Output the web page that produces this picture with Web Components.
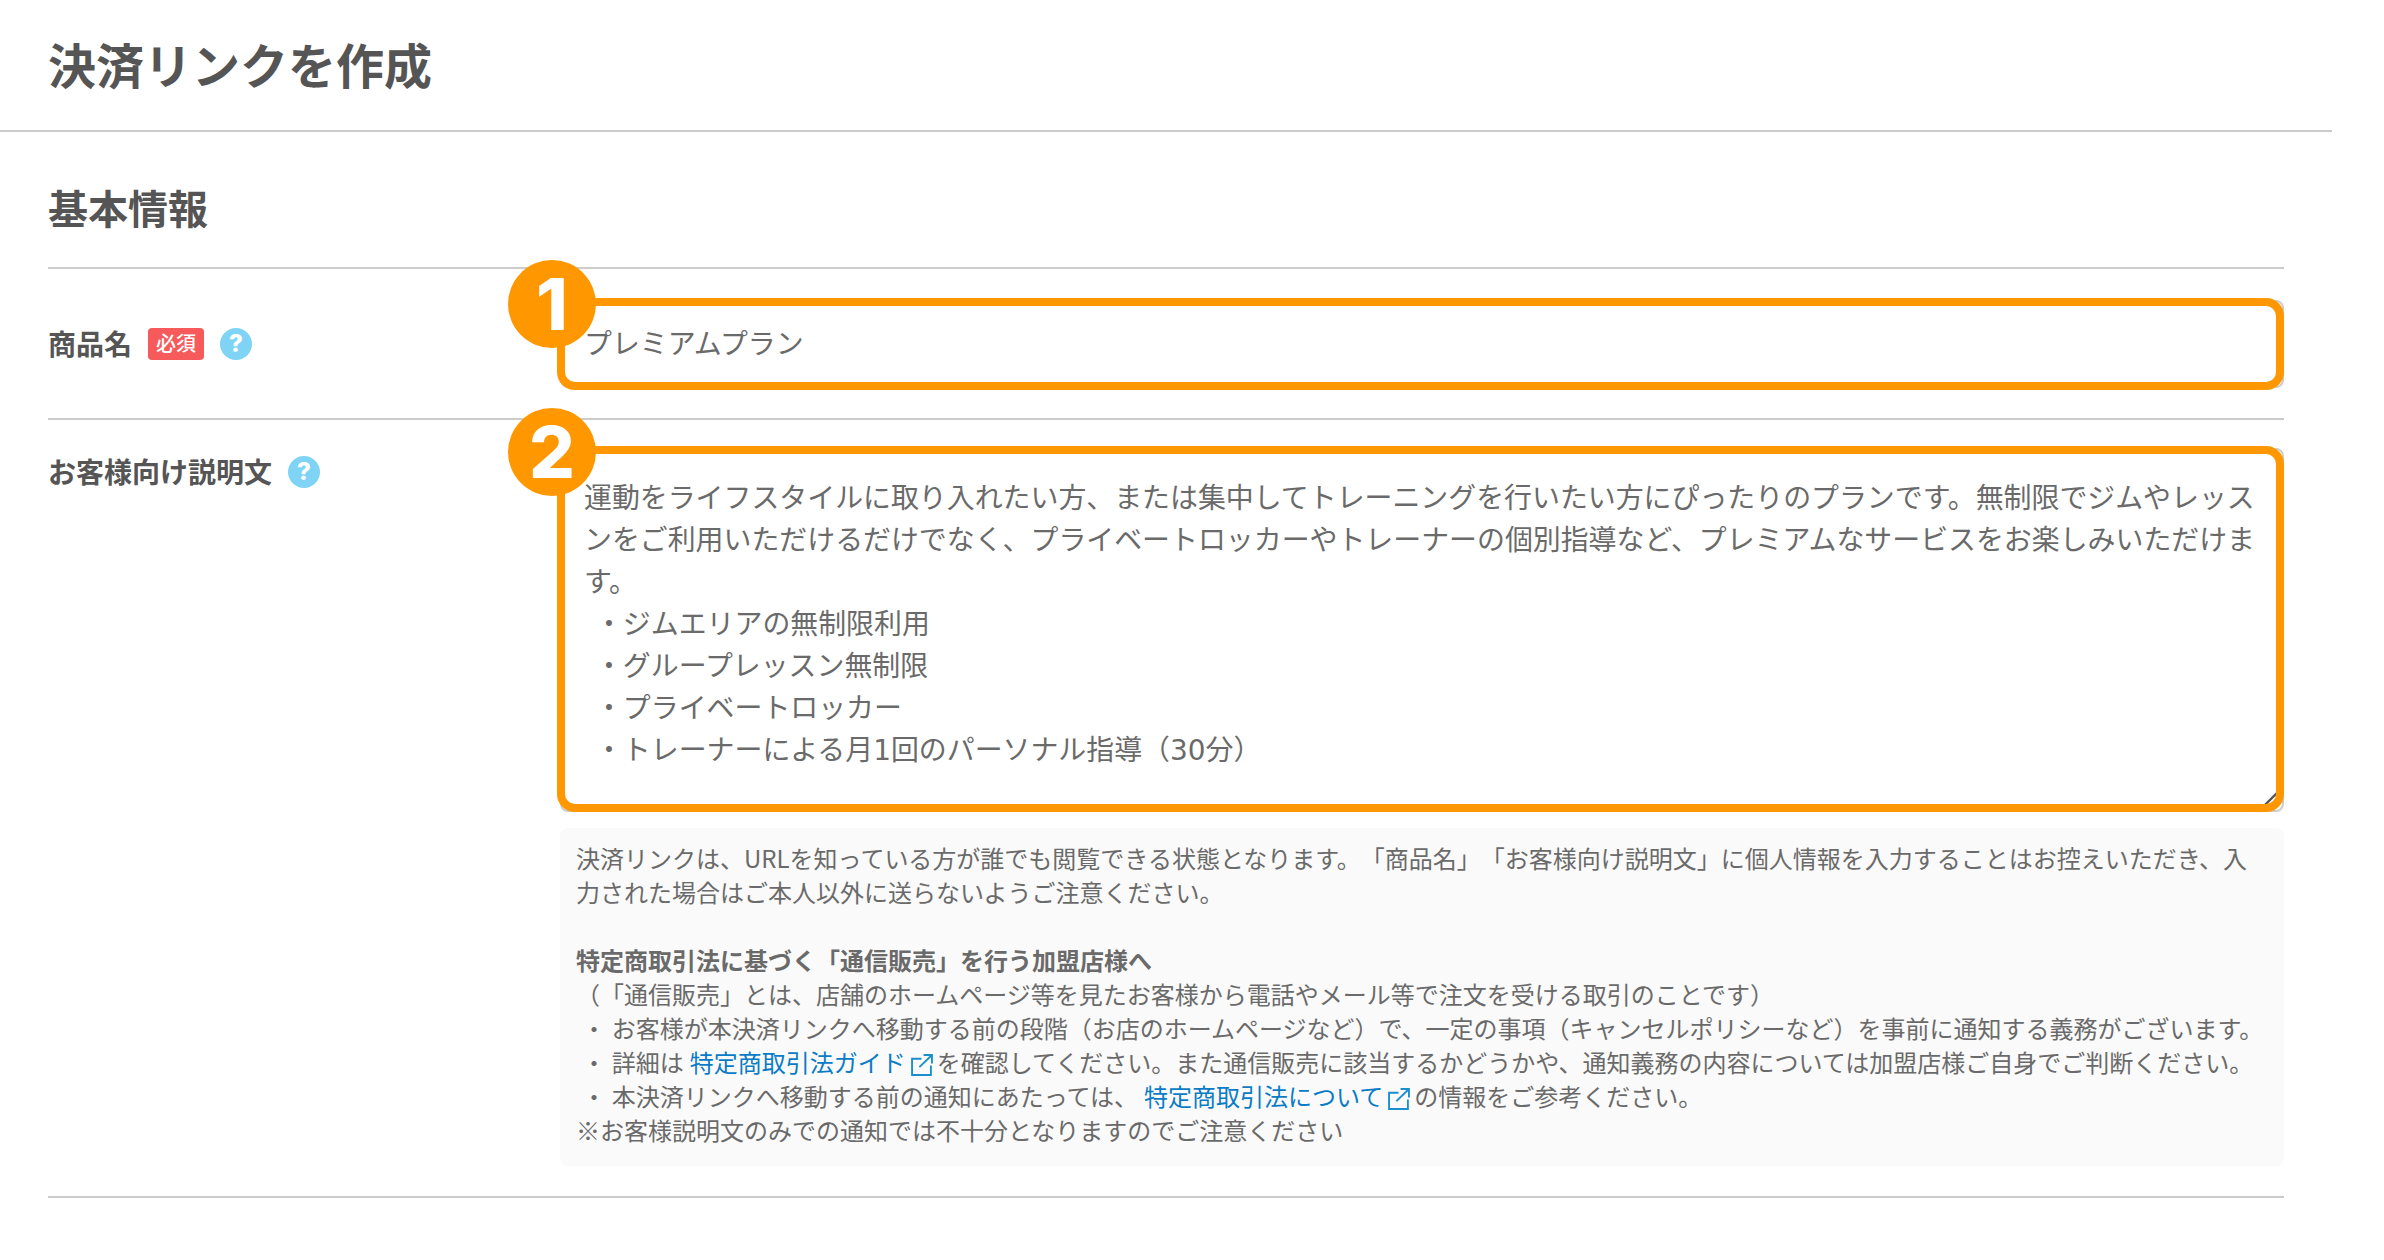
<!DOCTYPE html>
<html lang="ja">
<head>
<meta charset="utf-8">
<title>決済リンクを作成</title>
<style>
  html, body { margin: 0; background: #fff; }
  body { font-family: "Noto Sans CJK JP", "Noto Sans", sans-serif; color: #555; width: 2332px; text-spacing-trim: space-all; }
</style>
</head>
<body>
<page-header>決済リンクを作成</page-header>
<form-section heading="基本情報">
  <form-row label="商品名" required help step="1">
    <text-box>プレミアムプラン</text-box>
  </form-row>
  <form-row label="お客様向け説明文" help step="2">
    <text-box multiline>運動をライフスタイルに取り入れたい方、または集中してトレーニングを行いたい方にぴったりのプランです。無制限でジムやレッスンをご利用いただけるだけでなく、プライベートロッカーやトレーナーの個別指導など、プレミアムなサービスをお楽しみいただけます。
  ・ジムエリアの無制限利用
  ・グループレッスン無制限
  ・プライベートロッカー
  ・トレーナーによる月1回のパーソナル指導（30分）</text-box>
    <notice-box slot="below">
      <div>決済リンクは、URLを知っている方が誰でも閲覧できる状態となります。「商品名」「お客様向け説明文」に個人情報を入力することはお控えいただき、入力された場合はご本人以外に送らないようご注意ください。</div>
      <div>&nbsp;</div>
      <div><b>特定商取引法に基づく「通信販売」を行う加盟店様へ</b></div>
      <div>（「通信販売」とは、店舗のホームページ等を見たお客様から電話やメール等で注文を受ける取引のことです）</div>
      <div>&nbsp;・ お客様が本決済リンクへ移動する前の段階（お店のホームページなど）で、一定の事項（キャンセルポリシーなど）を事前に通知する義務がございます。</div>
      <div>&nbsp;・ 詳細は <ext-link>特定商取引法ガイド</ext-link>を確認してください。また通信販売に該当するかどうかや、通知義務の内容については加盟店様ご自身でご判断ください。</div>
      <div>&nbsp;・ 本決済リンクへ移動する前の通知にあたっては、 <ext-link>特定商取引法について</ext-link>の情報をご参考ください。</div>
      <div>※お客様説明文のみでの通知では不十分となりますのでご注意ください</div>
    </notice-box>
  </form-row>
</form-section>

<script>
class PageHeader extends HTMLElement {
  constructor() {
    super();
    this.attachShadow({ mode: 'open' });
    this.shadowRoot.innerHTML = `
      <style>
        :host { display: block; height: 130px; border-bottom: 2px solid #ccc; padding-left: 48px; }
        h1 { margin: 0; font-size: 48px; font-weight: 700; line-height: 126px; color: #555; }
      </style>
      <h1><slot></slot></h1>`;
  }
}

class FormSection extends HTMLElement {
  constructor() {
    super();
    this.attachShadow({ mode: 'open' });
    this.shadowRoot.innerHTML = `
      <style>
        :host { display: block; padding: 0 48px; }
        h2 { margin: 0; height: 137px; box-sizing: border-box; padding-top: 45px; font-size: 40px; font-weight: 700; line-height: 60px; color: #555; border-bottom: 2px solid #ccc; }
      </style>
      <h2></h2>
      <slot></slot>`;
    this.shadowRoot.querySelector('h2').textContent = this.getAttribute('heading');
  }
}

class FormRow extends HTMLElement {
  constructor() {
    super();
    this.attachShadow({ mode: 'open' });
    const label = this.getAttribute('label');
    const badge = this.hasAttribute('required') ? '<span class="badge">必須</span>' : '';
    const help = this.hasAttribute('help') ? '<span class="help">?</span>' : '';
    this.shadowRoot.innerHTML = `
      <style>
        :host { display: grid; grid-template-columns: 512px 1724px; border-bottom: 2px solid #ccc; box-sizing: border-box; }
        :host([required]) { padding: 31px 0 30px; }
        :host(:not([required])) { padding: 28px 0 30px; }
        .label { display: flex; align-items: center; height: 32px; gap: 16px; font-size: 28px; font-weight: 700; color: #555; line-height: 32px; }
        .label .name { margin-bottom: 3px; }
        :host([required]) .label { margin-top: 28px; }
        :host(:not([required])) .label { margin-top: 8px; }
        .badge { width: 56px; height: 32px; border-radius: 4px; background: #f65a5a; color: #fff; font-size: 20px; font-weight: 500; text-align: center; line-height: 30px; }
        .help { width: 32px; height: 32px; border-radius: 50%; background: #7fd4f5; color: #fff; font-family: Inter, sans-serif; font-size: 24px; font-weight: 800; text-align: center; line-height: 32px; }
        .field { position: relative; }
        ::slotted([slot="below"]) { margin-top: 16px; }
      </style>
      <div class="label"><span class="name"></span>${badge}${help}</div>
      <div class="field">
        <slot></slot>
        <slot name="below"></slot>
      </div>`;
    this.shadowRoot.querySelector('.name').textContent = label;
  }
}

class TextBox extends HTMLElement {
  constructor() {
    super();
    this.attachShadow({ mode: 'open' });
    const step = this.closest('form-row').getAttribute('step');
    this.shadowRoot.innerHTML = `
      <style>
        :host { display: block; position: relative; box-sizing: border-box; border: 2px solid #ccc; border-radius: 8px; background: #fff; padding: 0 22px; font-family: "DejaVu Sans", "Noto Sans CJK JP", sans-serif; font-size: 27.92px; color: #6a6a6a; }
        :host(:not([multiline])) { height: 88px; line-height: 86px; }
        :host([multiline]) { height: 364px; padding-top: 28px; line-height: 42px; }
        :host([multiline]) slot { white-space: pre-wrap; word-spacing: -3.4px; }
        .ring { position: absolute; left: -5px; right: -2px; top: -4px; bottom: -4px; border: 8px solid #ff9800; border-radius: 18px; pointer-events: none; }
        :host([multiline]) .ring { bottom: -2px; }
        .step { position: absolute; left: -54px; top: -42px; width: 88px; height: 88px; border-radius: 50%; background: #ff9800; color: #fff; font-family: Inter, sans-serif; font-size: 72px; font-weight: 800; line-height: 88px; text-align: center; }
        .grip { position: absolute; right: 0; bottom: 0; width: 18px; height: 18px; }
      </style>
      <slot></slot>
      ${this.hasAttribute('multiline') ? '<svg class="grip" viewBox="0 0 18 18"><path d="M0 14 14 0M8 18 18 8" stroke="#555" stroke-width="2.4" fill="none"/></svg>' : ''}
      <div class="ring"></div>
      <div class="step">${step}</div>`;
  }
}

class NoticeBox extends HTMLElement {
  constructor() {
    super();
    this.attachShadow({ mode: 'open' });
    this.shadowRoot.innerHTML = `
      <style>
        :host { display: block; box-sizing: border-box; background: #fafafa; border-radius: 8px; padding: 13px 16px 19px; font-size: 24px; line-height: 34px; color: #6a6a6a; }
        ::slotted(div) { word-spacing: 0.5px; }
      </style>
      <slot></slot>`;
  }
}

class ExtLink extends HTMLElement {
  constructor() {
    super();
    this.attachShadow({ mode: 'open' });
    this.shadowRoot.innerHTML = `
      <style>
        :host { display: inline; color: #0a7cc5; }
        svg { display: inline-block; width: 22px; height: 22px; vertical-align: -4px; margin: 0 4px 0 5px; }
      </style>
      <slot></slot><svg viewBox="0 0 21 21" fill="none" stroke="#1a8fd0" stroke-width="1.8"><path d="M10 4.500H1V20h18v-9"/><path d="M12 1h8v8M20 1 8 12.500"/></svg>`;
  }
}

customElements.define('page-header', PageHeader);
customElements.define('form-section', FormSection);
customElements.define('form-row', FormRow);
customElements.define('text-box', TextBox);
customElements.define('notice-box', NoticeBox);
customElements.define('ext-link', ExtLink);
</script>
</body>
</html>
